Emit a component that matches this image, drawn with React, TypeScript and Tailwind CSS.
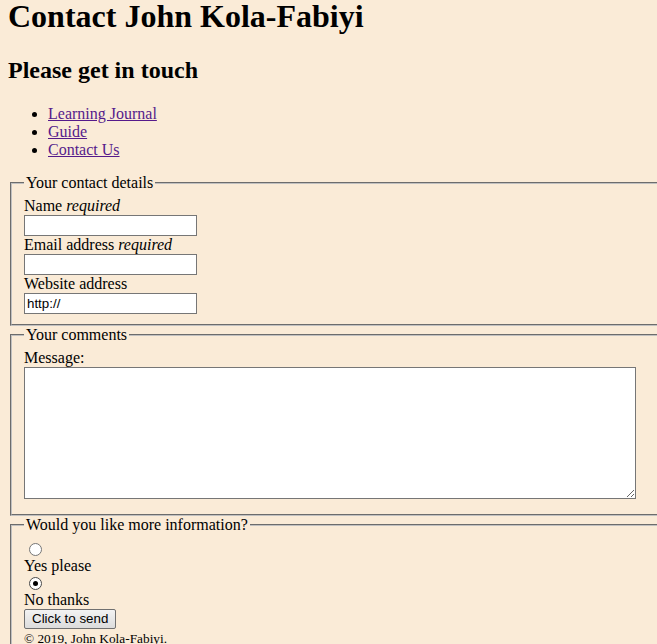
// App.tsx
import React from 'react';

const Radio: React.FC<{ checked?: boolean }> = ({ checked }) => (
  <span
    className={
      checked
        ? 'ml-[5px] flex h-[13px] w-[13px] items-center justify-center rounded-full border border-[#4a4a4a] bg-white'
        : 'ml-[5px] flex h-[13px] w-[13px] items-center justify-center rounded-full border border-[#767676] bg-white'
    }
  >
    {checked && <span className="h-[5px] w-[5px] rounded-full bg-black" />}
  </span>
);

const App: React.FC = () => {
  return (
    <div className="min-h-screen overflow-hidden bg-[#faebd7] px-2 font-['Liberation_Serif',serif] text-base leading-[normal] text-black">
      <h1 className="-mt-[2px] text-[32px] font-bold">Contact John Kola-Fabiyi</h1>
      <h2 className="mt-[22px] text-[24px] font-bold">Please get in touch</h2>

      <ul className="mt-[21px] mb-[15px] list-disc pl-10">
        <li><a href="#" className="text-[#551a8b] underline">Learning Journal</a></li>
        <li><a href="#" className="text-[#551a8b] underline">Guide</a></li>
        <li><a href="#" className="text-[#551a8b] underline">Contact Us</a></li>
      </ul>

      <form className="w-[700px]">
        <fieldset className="mx-[2px] border-2 border-[#c0c0c0] px-3 pt-[5px] pb-[10px] [border-style:groove]">
          <legend className="px-[2px]">Your contact details</legend>
          <label className="block">Name <em>required</em></label>
          <input type="text" className="block h-[21px] w-[173px] border border-[#767676] bg-white px-[2px] font-['Liberation_Sans',sans-serif] text-[13.33px]" />
          <label className="block">Email address <em>required</em></label>
          <input type="text" className="block h-[21px] w-[173px] border border-[#767676] bg-white px-[2px] font-['Liberation_Sans',sans-serif] text-[13.33px]" />
          <label className="block">Website address</label>
          <input type="text" defaultValue="http://" className="block h-[21px] w-[173px] border border-[#767676] bg-white px-[2px] font-['Liberation_Sans',sans-serif] text-[13.33px]" />
        </fieldset>

        <fieldset className="mx-[2px] border-2 border-[#c0c0c0] px-3 pt-[5px] pb-[10px] [border-style:groove]">
          <legend className="px-[2px]">Your comments</legend>
          <label className="block">Message:</label>
          <textarea className="mb-[5px] block h-[132px] w-[612px] border border-[#767676] bg-white px-[2px] font-['Liberation_Mono',monospace] text-[13.33px]" />
        </fieldset>

        <fieldset className="mx-[2px] border-2 border-[#c0c0c0] px-3 pt-[5px] pb-[10px] [border-style:groove]">
          <legend className="px-[2px]">Would you like more information?</legend>
          <div className="h-[18px] pt-[4px]">
            <Radio />
          </div>
          <label className="block">Yes please</label>
          <div className="h-[16px] pt-[2px]">
            <Radio checked />
          </div>
          <label className="block">No thanks</label>
          <button type="button" className="block h-[20px] rounded-[2px] border border-[#707070] bg-linear-to-b from-[#f3f3f3] to-[#dcdcdc] px-[7px] font-['Liberation_Sans',sans-serif] text-[13.33px] leading-none">
            Click to send
          </button>
          <small className="mt-[2px] block text-[13.33px]">&copy; 2019, John Kola-Fabiyi.</small>
        </fieldset>
      </form>
    </div>
  );
};

export default App;
